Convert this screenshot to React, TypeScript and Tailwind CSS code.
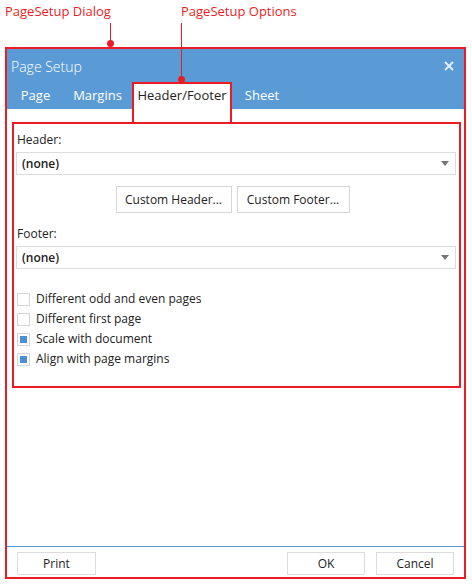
import React from "react";

const font = { fontFamily: '"Open Sans", "Noto Sans", Arial, sans-serif' };

function Dropdown() {
  return (
    <div className="ml-[2px] mr-[3px] flex h-[23px] items-center justify-between border border-[#dcdcdc] bg-white pl-[5px] pr-[6px] text-[12px] font-semibold text-[#222]">
      <span>(none)</span>
      <svg width="8" height="5" viewBox="0 0 8 5">
        <path d="M0 0h8L4 5z" fill="#777" />
      </svg>
    </div>
  );
}

function Check({ label, checked }: { label: string; checked?: boolean }) {
  return (
    <div className="flex h-[20px] items-center gap-[6px] pl-[3px]">
      <div className="flex h-[13px] w-[13px] items-center justify-center border border-[#d6d6d6] bg-white">
        {checked && <div className="h-[7px] w-[7px] bg-[#4a8fd8]" />}
      </div>
      <span className="text-[12px] text-[#222]">{label}</span>
    </div>
  );
}

export default function App() {
  return (
    <div className="relative h-[584px] w-[472px] bg-white" style={font}>
      {/* annotations */}
      <div className="relative h-[47px]">
        <span className="absolute left-[5px] top-[2px] text-[13px] leading-[18px] text-[#ed1c24]">
          PageSetup Dialog
        </span>
        <span className="absolute left-[181px] top-[2px] text-[13px] leading-[18px] text-[#ed1c24]">
          PageSetup Options
        </span>
        <div className="absolute left-[110px] top-[23px] h-[20px] w-px bg-[#ed1c24]" />
        <div className="absolute left-[107px] top-[40px] h-[7px] w-[7px] rounded-full bg-[#ed1c24]" />
      </div>
      <div className="absolute left-[181px] top-[23px] h-[56px] w-px bg-[#ed1c24]" />
      <div className="absolute left-[178px] top-[76px] z-10 h-[7px] w-[7px] rounded-full bg-[#ed1c24]" />
      <div className="absolute left-[132px] top-[82px] z-10 h-[42px] w-[100px] border-2 border-[#ed1c24]" />

      {/* dialog */}
      <div className="ml-[5px] flex h-[532px] w-[461px] flex-col border-2 border-[#ed1c24]">
        <div className="bg-[#5b9bd5]">
          <div className="flex h-[34px] items-center justify-between pl-[4px] pr-[10px]">
            <span className="text-[14px] font-light text-white">Page Setup</span>
            <svg width="10" height="10" viewBox="0 0 10 10">
              <path d="M1 1l8 8M9 1l-8 8" stroke="#e8f0fa" strokeWidth="1.8" />
            </svg>
          </div>
          <div className="flex h-[26px] pl-[2px] text-[13px]">
            <div className="flex w-[53px] items-center justify-center text-white">Page</div>
            <div className="flex w-[71px] items-center justify-center text-white">Margins</div>
            <div className="flex w-[98px] items-center justify-center bg-white text-[#222]">Header/Footer</div>
            <div className="flex w-[62px] items-center justify-center text-white">Sheet</div>
          </div>
        </div>

        <div className="flex-1 pl-[5px] pr-[3px] pt-[13px]">
          <div className="flex h-[266px] flex-col border-2 border-[#ed1c24] pt-[7px]">
            <div className="pl-[3px] text-[12px] leading-[17px] text-[#222]">Header:</div>
            <div className="mt-[4px]">
              <Dropdown />
            </div>
            <div className="mt-[11px] flex justify-center gap-[5px] pr-[8px]">
              <button className="h-[27px] w-[116px] border border-[#d6d6d6] bg-white text-[12px] text-[#222]">
                Custom Header...
              </button>
              <button className="h-[27px] w-[113px] border border-[#d6d6d6] bg-white text-[12px] text-[#222]">
                Custom Footer...
              </button>
            </div>
            <div className="mt-[12px] pl-[3px] text-[12px] leading-[17px] text-[#222]">Footer:</div>
            <div className="mt-[4px]">
              <Dropdown />
            </div>
            <div className="mt-[20px] flex flex-col">
              <Check label="Different odd and even pages" />
              <Check label="Different first page" />
              <Check label="Scale with document" checked />
              <Check label="Align with page margins" checked />
            </div>
          </div>
        </div>

        <div className="flex h-[31px] items-start border-t border-[#5b9bd5] pl-[10px] pr-[10px] pt-[5px]">
          <button className="h-[23px] w-[79px] border border-[#dcdcdc] bg-white text-[12px] text-[#222]">
            Print
          </button>
          <div className="flex-1" />
          <button className="h-[23px] w-[78px] border border-[#dcdcdc] bg-white text-[12px] text-[#222]">
            OK
          </button>
          <button className="ml-[11px] h-[23px] w-[78px] border border-[#dcdcdc] bg-white text-[12px] text-[#222]">
            Cancel
          </button>
        </div>
      </div>
    </div>
  );
}
